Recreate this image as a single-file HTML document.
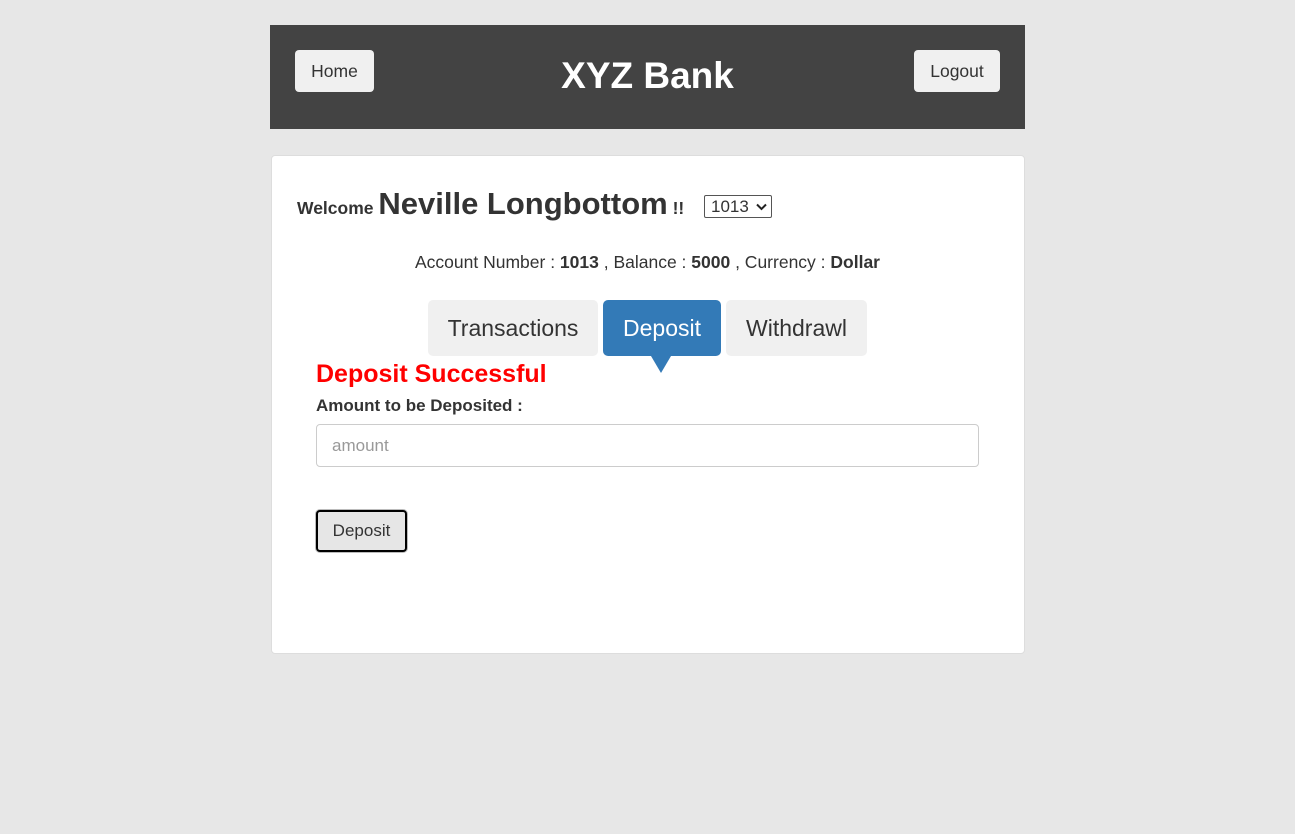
<!DOCTYPE html>
<html><head><style>
body{margin:0;background:#e7e7e7;font-family:"Liberation Sans",sans-serif;color:#333;width:1295px;height:834px;position:relative}
.hdr{position:absolute;left:270px;top:25px;width:755px;height:104px;background:#434343}
.btn{position:absolute;background:#f0f0f0;border-radius:4px;font-size:17.5px;color:#333;text-align:center;line-height:42px;height:42px}
.title{position:absolute;left:0;width:100%;top:30px;text-align:center;color:#fff;font-weight:bold;font-size:37px}
.card{position:absolute;left:271px;top:155px;width:752px;height:497px;background:#fff;border:1px solid #ddd;border-radius:4px}
.tab{position:absolute;top:300px;height:56px;line-height:56px;font-size:23px;border-radius:5px;background:#f0f0f0;text-align:center}
</style></head><body>
<div class="hdr">
<div class="btn" style="left:25px;top:25px;width:79px">Home</div>
<div class="title">XYZ Bank</div>
<div class="btn" style="left:644px;top:25px;width:86px">Logout</div>
</div>
<div class="card"></div>
<div style="position:absolute;left:297px;top:186px;font-weight:bold;font-size:17.5px">Welcome <span style="font-size:31px">Neville Longbottom</span> !!</div>
<div style="position:absolute;left:704px;top:195px;width:68px;height:23px;border:1px solid #555;border-radius:2px;font-size:17px;line-height:22px;padding-left:6px;box-sizing:border-box">1013<svg style="position:absolute;right:4px;top:7px" width="11" height="8" viewBox="0 0 11 8"><path d="M1 1.5L5.5 6L10 1.5" fill="none" stroke="#222" stroke-width="2"/></svg></div>
<div style="position:absolute;left:0;width:1295px;top:252px;text-align:center;font-size:17.5px">Account Number : <b>1013</b> , Balance : <b>5000</b> , Currency : <b>Dollar</b></div>
<div class="tab" style="left:428px;width:170px">Transactions</div>
<div class="tab" style="left:603px;width:118px;background:#337ab7;color:#fff">Deposit</div>
<div style="position:absolute;left:651px;top:356px;border:10px solid transparent;border-top:17px solid #337ab7;border-bottom:0"></div>
<div class="tab" style="left:726px;width:141px">Withdrawl</div>
<div style="position:absolute;left:316px;top:360px;color:red;font-weight:bold;font-size:25px">Deposit Successful</div>
<div style="position:absolute;left:316px;top:396px;font-weight:bold;font-size:17px">Amount to be Deposited :</div>
<div style="position:absolute;left:316px;top:424px;width:663px;height:43px;border:1px solid #ccc;border-radius:4px;box-sizing:border-box;color:#999;font-size:17px;line-height:41px;padding-left:15px">amount</div>
<div style="position:absolute;left:316px;top:510px;width:91px;height:42px;border:2px solid #000;border-radius:4px;box-sizing:border-box;background:#e6e6e6;box-shadow:0 0 0 1px #bbb;font-size:17px;text-align:center;line-height:38px">Deposit</div>
</body></html>
